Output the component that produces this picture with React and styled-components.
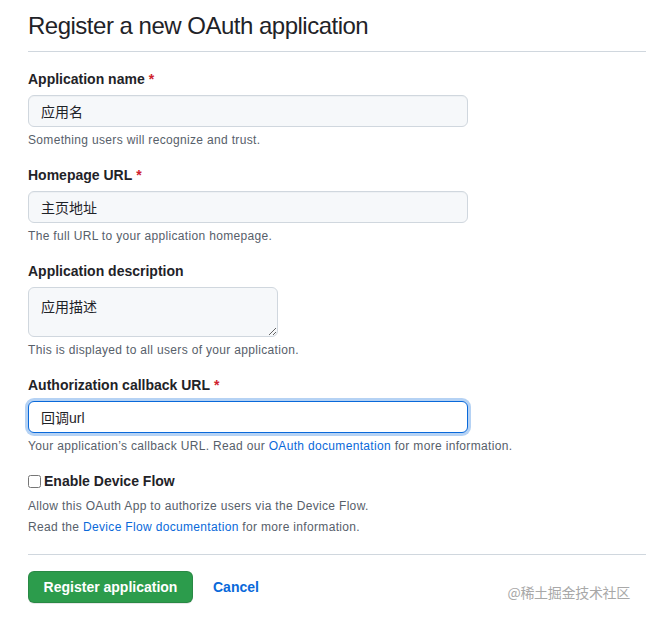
import React from 'react';
import styled, { createGlobalStyle } from 'styled-components';

const GlobalStyle = createGlobalStyle`
  html, body {
    margin: 0;
    padding: 0;
    background: #ffffff;
  }
  body {
    font-family: "Liberation Sans", Arial, "Noto Sans CJK SC", sans-serif;
    color: #1f2328;
  }
`

const Page = styled.div`
  position: relative;
  padding: 0 0 16px 28px;
  height: 618px;
  box-sizing: border-box;
`

const Header = styled.div`
  padding-top: 9px;
  padding-bottom: 8px;
  border-bottom: 1px solid #d0d7de;
`

const Title = styled.h1`
  margin: 0;
  font-size: 24px;
  font-weight: 400;
  line-height: 34px;
  letter-spacing: -0.5px;
`

const Form = styled.form`
  padding-top: 17px;
  width: 100%;
`

const Group = styled.div`
  display: flex;
  flex-direction: column;
  align-items: flex-start;
  margin-bottom: 16px;
`

const Label = styled.label`
  font-size: 14px;
  font-weight: 700;
  line-height: 20px;
  margin-bottom: 6px;
  display: flex;
  align-items: center;
  gap: 4px;
`

const Required = styled.span`
  color: #cf222e;
`

const Input = styled.input`
  box-sizing: border-box;
  width: 440px;
  height: 32px;
  padding: 5px 12px;
  font-size: 14px;
  line-height: 20px;
  font-family: inherit;
  color: #1f2328;
  background: ${p => (p.$focused ? '#ffffff' : '#f6f8fa')};
  border: 1px solid ${p => (p.$focused ? '#0969da' : '#d0d7de')};
  border-radius: 6px;
  box-shadow: ${p => (p.$focused ? '0 0 0 3px rgba(9, 105, 218, 0.3)' : 'inset 0 1px 0 rgba(208, 215, 222, 0.2)')};
  outline: none;
`

const TextArea = styled.textarea`
  box-sizing: border-box;
  width: 250px;
  height: 50px;
  padding: 9px 12px;
  font-size: 14px;
  line-height: 20px;
  font-family: inherit;
  color: #1f2328;
  background: #f6f8fa;
  border: 1px solid #d0d7de;
  border-radius: 6px;
  outline: none;
  resize: vertical;
  display: block;
`

const Note = styled.p`
  margin: 4px 0 0;
  font-size: 12px;
  line-height: 18px;
  letter-spacing: 0.33px;
  color: #57606a;
`

const Link = styled.a`
  color: #0969da;
  text-decoration: none;
`

const CheckRow = styled.label`
  display: flex;
  align-items: center;
  gap: 3px;
  font-size: 14px;
  font-weight: 700;
  line-height: 20px;
`

const Check = styled.input`
  margin: 0;
  width: 13px;
  height: 13px;
`

const FlowNotes = styled.div`
  margin-top: 5px;
  font-size: 12px;
  line-height: 21px;
  letter-spacing: 0.33px;
  color: #57606a;
`

const Footer = styled.div`
  border-top: 1px solid #d0d7de;
  padding-top: 16px;
  display: flex;
  align-items: center;
  gap: 20px;
`

const PrimaryButton = styled.button`
  height: 32px;
  width: 165px;
  padding: 0 12px;
  white-space: nowrap;
  font-family: inherit;
  font-size: 14px;
  font-weight: 700;
  color: #ffffff;
  background: #2c9c4c;
  border: 1px solid rgba(27, 31, 36, 0.15);
  border-radius: 6px;
  box-shadow: 0 1px 0 rgba(27, 31, 36, 0.1);
`

const CancelLink = styled.a`
  color: #0969da;
  font-size: 14px;
  font-weight: 700;
  text-decoration: none;
`

const Watermark = styled.div`
  position: absolute;
  right: 16px;
  bottom: 16px;
  font-size: 14px;
  color: #a8a8a8;
  font-family: "Noto Sans CJK SC", sans-serif;
  letter-spacing: -0.3px;
`

const fields = [
  { label: 'Application name', value: '应用名', required: true, note: 'Something users will recognize and trust.' },
  { label: 'Homepage URL', value: '主页地址', required: true, note: 'The full URL to your application homepage.' },
]

export default function App() {
  return (
    <>
      <GlobalStyle />
      <Page>
        <Header>
          <Title>Register a new OAuth application</Title>
        </Header>
        <Form onSubmit={e => e.preventDefault()}>
          {fields.map(f => (
            <Group key={f.label}>
              <Label>
                {f.label} {f.required && <Required>*</Required>}
              </Label>
              <Input defaultValue={f.value} />
              <Note>{f.note}</Note>
            </Group>
          ))}

          <Group>
            <Label>Application description</Label>
            <TextArea defaultValue="应用描述" />
            <Note>This is displayed to all users of your application.</Note>
          </Group>

          <Group>
            <Label>
              Authorization callback URL <Required>*</Required>
            </Label>
            <Input $focused defaultValue="回调url" />
            <Note>
              Your application’s callback URL. Read our <Link href="#">OAuth documentation</Link> for more information.
            </Note>
          </Group>

          <Group>
            <CheckRow>
              <Check type="checkbox" />
              Enable Device Flow
            </CheckRow>
            <FlowNotes>
              <div>Allow this OAuth App to authorize users via the Device Flow.</div>
              <div>
                Read the <Link href="#">Device Flow documentation</Link> for more information.
              </div>
            </FlowNotes>
          </Group>

          <Footer>
            <PrimaryButton type="submit">Register application</PrimaryButton>
            <CancelLink href="#">Cancel</CancelLink>
          </Footer>
        </Form>
        <Watermark>@稀土掘金技术社区</Watermark>
      </Page>
    </>
  )
}
